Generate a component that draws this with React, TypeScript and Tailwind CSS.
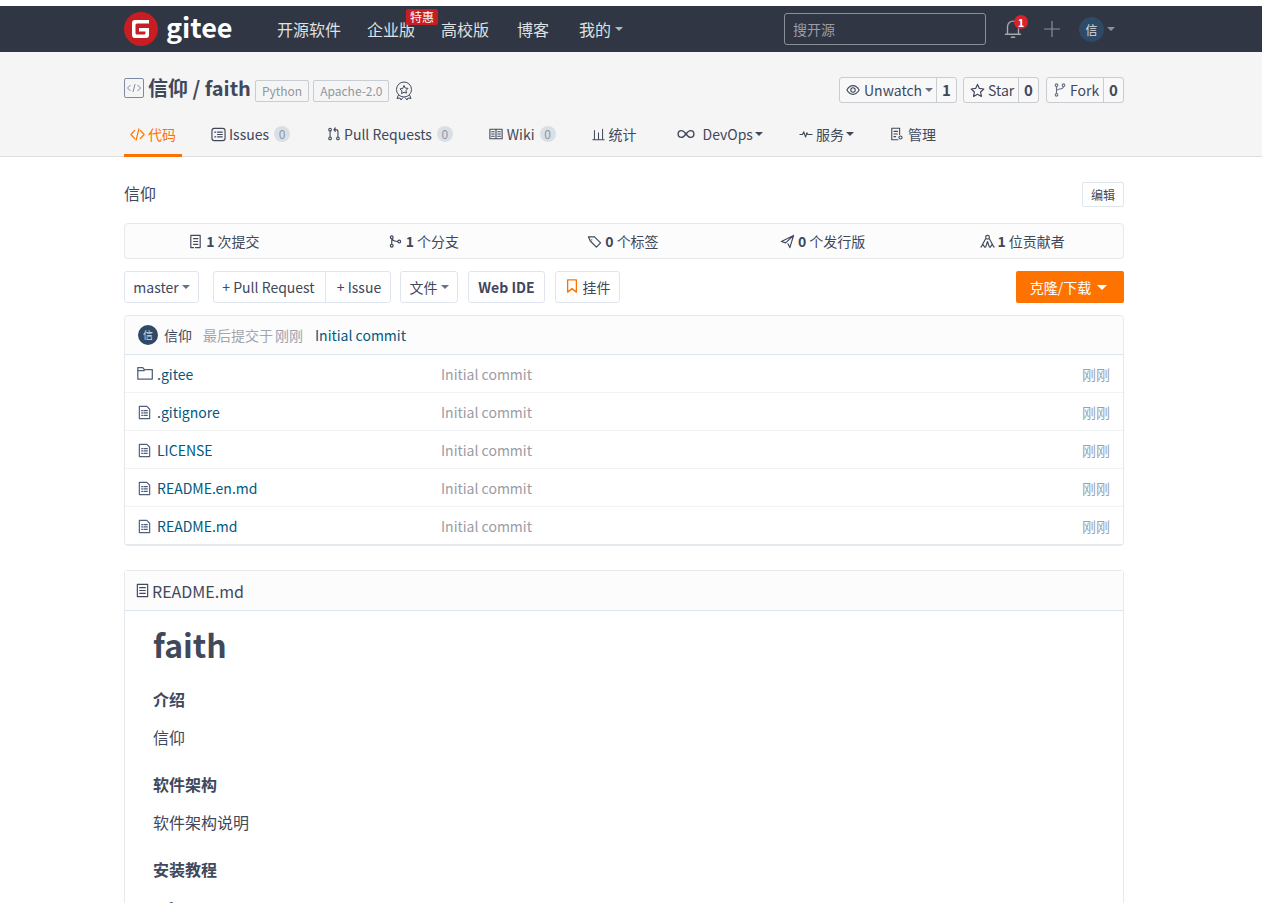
import type { ReactNode } from "react";

const Caret = ({ className = "border-t-[#6a7180]" }: { className?: string }) => (
  <span className={`inline-block w-0 h-0 border-x-[4px] border-x-transparent border-t-[4px] ${className}`} />
);

const Icon = ({ children, size = 14, className = "" }: { children: ReactNode; size?: number; className?: string }) => (
  <svg
    width={size}
    height={size}
    viewBox="0 0 16 16"
    fill="none"
    stroke="currentColor"
    strokeWidth="1.250"
    strokeLinecap="round"
    strokeLinejoin="round"
    className={`shrink-0 ${className}`}
  >
    {children}
  </svg>
);

const FileIcon = () => (
  <Icon size={15} className="text-[#4f5f7e]">
    <path d="M2.500 1.500h8l3 3v10h-11z" />
    <path d="M5 6h1M5 8.500h1M5 11h1M7.500 6h3.500M7.500 8.500h3.500M7.500 11h3.500" strokeWidth="1.300" />
  </Icon>
);

const FolderIcon = () => (
  <Icon size={16} className="text-[#4f5f7e] -mt-[2px]">
    <path d="M.8 14V2.500h5l1.500 2h8V14z" />
    <path d="M.8 5.500h6.500" />
  </Icon>
);

const files = [
  { name: ".gitee", folder: true },
  { name: ".gitignore" },
  { name: "LICENSE" },
  { name: "README.en.md" },
  { name: "README.md" },
];

const stats = [
  {
    n: "1",
    label: "次提交",
    icon: <path d="M3 1.500h10v13H8M3 1.500v13h3M6 5h4.500M6 8h4.500M6 11h4.500" />,
  },
  {
    n: "1",
    label: "个分支",
    icon: <path d="M4 5v6M5.500 3.500a1.500 1.500 0 1 1-3 0 1.500 1.500 0 0 1 3 0zM5.500 12.500a1.500 1.500 0 1 1-3 0 1.500 1.500 0 0 1 3 0zM13.500 8a1.500 1.500 0 1 1-3 0 1.500 1.500 0 0 1 3 0zM10.500 8C8 8 5 7 4.500 5" />,
  },
  {
    n: "0",
    label: "个标签",
    icon: <path d="M1.500 3h6.500l6.500 6.500-4.500 4.500-6.500-6.500zM5 6.200h.1" />,
  },
  {
    n: "0",
    label: "个发行版",
    icon: <path d="M14.500 1.500L1.500 8l4.500 1.500 8.500-8-4 13-2-4" />,
  },
  {
    n: "1",
    label: "位贡献者",
    icon: <path d="M8 1.500a2 2 0 1 1 0 4 2 2 0 0 1 0-4zM6 5l-3.500 6.500M10 5l3.500 6.500M1 14l2-3 2 3M6 14l2-6 2 6M11 14l2-3 2 3" />,
  },
];

const Tab = ({ icon, label, count, caret, className = "", gap = "gap-[3px]" }: { icon: ReactNode; label: string; count?: boolean; caret?: boolean; className?: string; gap?: string }) => (
  <div className={`flex items-center h-[20px] mt-[1px] ${className}`}>
    <div className={`flex items-center ${gap}`}>
      {icon}
      <span>{label}</span>
    </div>
    {caret && <Caret className="ml-[2px] border-t-[#40485b]" />}
    {count && (
      <span className="ml-[5px] w-[16px] h-[16px] rounded-full bg-[#dadfe5] text-[#8a95a5] text-[12px] leading-[16px] text-center">0</span>
    )}
  </div>
);

const SocialBtn = ({ icon, label, count, caret, className, gap }: { icon: ReactNode; label: string; count: string; caret?: boolean; className: string; gap: string }) => (
  <div className={`flex h-[26px] border border-[#c8ccd3] rounded-[3px] bg-[#f8f8f8] text-[14px] leading-[24px] text-[#40485b] ${className}`}>
    <div className={`flex-1 flex items-center pl-[6px] ${gap}`}>
      {icon}
      <span>{label}</span>
      {caret && <Caret className="-ml-[1px] border-t-[#6a7180]" />}
    </div>
    <div className="border-l border-[#c8ccd3] w-[20px] text-center text-[15px] font-bold">{count}</div>
  </div>
);

export default function App() {
  return (
    <div className="min-h-screen bg-white pt-[6px] text-[#40485b] font-['Noto_Sans_CJK_SC','Noto_Sans',sans-serif] text-[14px]">
      {/* NAVBAR */}
      <div className="h-[46px] bg-[#303643] pl-[124px] flex items-center text-[16px] text-[#dfe1e4]">
        <div className="w-[34px] h-[34px] rounded-full bg-[#c71d23] flex items-center justify-center">
          <svg width="22" height="22" viewBox="0 0 22 22">
            <path d="M5 2h14v3.500H7a1.500 1.500 0 0 0-1.500 1.500v8A1.500 1.500 0 0 0 7 16.500h7a1.500 1.500 0 0 0 1.500-1.500v-1.500H9V10h10v7a3 3 0 0 1-3 3H5a3 3 0 0 1-3-3V5a3 3 0 0 1 3-3z" fill="#fff" />
          </svg>
        </div>
        <div className="ml-[8px] w-[111px] text-[27px] leading-[34px] font-bold text-white -mt-[4px]">gitee</div>
        <div>开源软件</div>
        <div className="relative ml-[26px]">
          企业版
          <span className="absolute left-[39px] -top-[8px] w-[32px] h-[16px] rounded-[2px] bg-[#c71d23] text-white text-[12px] leading-[16px] text-center">特惠</span>
        </div>
        <div className="ml-[26px]">高校版</div>
        <div className="ml-[28px]">博客</div>
        <div className="ml-[30px] flex items-center gap-[4px]">
          我的 <Caret className="border-t-[#b5b8be]" />
        </div>
        <div className="ml-[161px] w-[202px] h-[32px] border border-[#8b8f98] rounded-[3px] pl-[8px] text-[14px] leading-[30px] text-[#9a9da5]">搜开源</div>
        <div className="relative ml-[16px] w-[22px] h-[22px] -mt-[3px] text-[#9a9da5]">
          <Icon size={22} className="text-[#a5a8ae]">
            <path d="M2.500 12.500h11M4 12.500V7a4 4 0 0 1 8 0v5.500M6.800 14.700h2.400" strokeWidth="1" />
          </Icon>
          <span className="absolute left-[12px] -top-[2px] w-[14px] h-[14px] rounded-full bg-[#d8232a] text-white text-[11px] leading-[14px] font-bold text-center">1</span>
        </div>
        <svg width="18" height="18" viewBox="0 0 18 18" className="ml-[19px] text-[#8b8f98]" stroke="currentColor" strokeWidth="1.200">
          <path d="M9 1v16M1 9h16" />
        </svg>
        <div className="ml-[18px] w-[25px] h-[25px] rounded-full bg-[#2f4a66] text-[#d5dbe2] text-[12px] leading-[25px] text-center">信</div>
        <Caret className="ml-[3px] border-t-[#8b8f98]" />
      </div>

      {/* REPO HEADER */}
      <div className="h-[105px] bg-[#f5f5f5] border-b border-[#dddddd] pl-[124px] pr-[138px]">
        <div className="flex items-center pt-[25px] h-[51px]">
          <svg width="20" height="20" viewBox="0 0 20 20" fill="none" stroke="#7d8aa3" strokeWidth="1" className="-mt-[5px]">
            <rect x="0.500" y="0.500" width="19" height="19" rx="1.500" />
            <path d="M6.500 7l-3 3 3 3M13.500 7l3 3-3 3M11 6l-2 8" />
          </svg>
          <div className="ml-[4px] -mt-[4px] text-[20px] leading-[26px] font-semibold text-[#40485b]">信仰 / faith</div>
          <span className="ml-[4px] mt-[2px] h-[22px] px-[6px] border border-[#c8ccd3] rounded-[2px] text-[12px] leading-[20px] text-[#8f97a3]">Python</span>
          <span className="ml-[4px] mt-[2px] h-[22px] px-[6px] border border-[#c8ccd3] rounded-[2px] text-[12px] leading-[20px] text-[#8f97a3]">Apache-2.0</span>
          <svg width="18" height="20" viewBox="0 0 18 20" fill="none" stroke="#40485b" strokeWidth="1" className="ml-[6px] mt-[2px]">
            <circle cx="9" cy="8.500" r="7.500" />
            <path d="M9 4.500l1.200 2.500 2.800.4-2 2 .5 2.700L9 11.300l-2.500 1.300.5-2.700-2-2 2.800-.4z" />
            <path d="M3.500 14l-1.500 3.500 3-.5 1 2 2-2.500M14.500 14l1.500 3.500-3-.5-1 2-2-2.500" />
          </svg>
          <div className="ml-auto flex">
            <SocialBtn
              className="w-[118px]"
              gap="gap-[4px]"
              label="Unwatch"
              count="1"
              caret
              icon={
                <Icon size={14} className="text-[#40485b]">
                  <path d="M1 8c2-3.500 4.500-5 7-5s5 1.500 7 5c-2 3.500-4.500 5-7 5s-5-1.500-7-5z" />
                  <circle cx="8" cy="8" r="2.500" />
                </Icon>
              }
            />
            <SocialBtn
              className="w-[76px] ml-[6px]"
              gap="gap-[3px]"
              label="Star"
              count="0"
              icon={
                <Icon size={15} className="text-[#40485b]">
                  <path d="M8 1.500l2 4.300 4.700.6-3.400 3.200.9 4.700L8 12l-4.200 2.300.9-4.700L1.300 6.400 6 5.800z" />
                </Icon>
              }
            />
            <SocialBtn
              className="w-[78px] ml-[7px]"
              gap="gap-[3px]"
              label="Fork"
              count="0"
              icon={
                <Icon size={14} className="text-[#6a7180]">
                  <circle cx="4" cy="2.500" r="1.500" />
                  <circle cx="12" cy="2.500" r="1.500" />
                  <circle cx="4" cy="13.500" r="1.500" />
                  <path d="M4 4v8M12 4c0 4-8 2-8 5" />
                </Icon>
              }
            />
          </div>
        </div>
        <div className="flex h-[53px] text-[14px] leading-[20px] pt-[20px] relative">
          <div className="absolute left-0 bottom-[-1px] w-[58px] h-[3px] bg-[#fe7300]" />
          <div className="absolute left-[6px] top-[21px] flex items-center gap-[3px] text-[#fe7300]">
            <Icon size={15}><path d="M5 3.500L1 8l4 4.500M11 3.500L15 8l-4 4.500M9.500 2l-3 12" /></Icon>
            <span>代码</span>
          </div>
          <Tab
            className="ml-[87px]"
            label="Issues"
            count
            icon={<Icon size={15}><rect x="1" y="1.500" width="14" height="13" rx="2.500" /><path d="M4 5.500h1M4 10.500h1M7 5.500h5M7 8h5M7 10.500h5" /></Icon>}
          />
          <Tab
            className="ml-[37px]"
            label="Pull Requests"
            count
            icon={<Icon size={14}><circle cx="3.500" cy="3" r="1.500" /><circle cx="3.500" cy="13" r="1.500" /><circle cx="12.500" cy="13" r="1.500" /><path d="M3.500 4.500v7M12.500 11.500V5c0-1.500-1-2-2.500-2H8M9.500 1L8 3l1.500 2" /></Icon>}
          />
          <Tab
            className="ml-[36px]"
            gap="gap-[4px]"
            label="Wiki"
            count
            icon={<Icon size={14}><path d="M1 2.500h14v11H1zM8 2.500v11M3 5.500h3M3 8h3M3 10.500h3M10 5.500h3M10 8h3M10 10.500h3" /></Icon>}
          />
          <Tab
            className="ml-[36px]"
            gap="gap-[4px]"
            label="统计"
            icon={<Icon size={13}><path d="M1 14.500h14M3 3v11M8 6v8M13 1.500v12.500" /></Icon>}
          />
          <Tab
            className="ml-[40px]"
            gap="gap-[8px]"
            label="DevOps"
            caret
            icon={<Icon size={18}><path d="M8 8c-1.500-2-2.500-3-4-3a3 3 0 0 0 0 6c1.500 0 2.500-1 4-3zm0 0c1.500-2 2.500-3 4-3a3 3 0 0 1 0 6c-1.500 0-2.500-1-4-3z" /></Icon>}
          />
          <Tab
            className="ml-[36px]"
            label="服务"
            caret
            icon={<Icon size={14}><path d="M1 8.500h3l1.500-3 2 6 1.500-5 1 2h5" /></Icon>}
          />
          <Tab
            className="ml-[36px]"
            gap="gap-[4px]"
            label="管理"
            icon={<Icon size={14}><path d="M2 14.500v-13h9v7M2 14.500h7M4.500 5h4M4.500 8h4M4.500 11h2" /><circle cx="12" cy="12" r="1.800" /></Icon>}
          />
        </div>
      </div>

      {/* MAIN */}
      <div className="ml-[124px] w-[1000px]">
        <div className="flex items-center justify-between h-[25px] mt-[25px]">
          <div className="text-[16px] leading-[25px] -mt-[2px]">信仰</div>
          <div className="w-[42px] h-[25px] border border-[#dfe5ec] rounded-[2px] text-[12px] leading-[23px] text-center">编辑</div>
        </div>

        {/* STATS */}
        <div className="mt-[16px] h-[36px] grid grid-cols-5 border border-[#e3e9ed] rounded-[4px] bg-[#fcfcfc]">
          {stats.map((s) => (
            <div key={s.label} className="flex items-center justify-center gap-[3px] pr-[2px] text-[14px] leading-[34px]">
              <Icon size={15}>{s.icon}</Icon>
              <b className="font-bold">{s.n}</b>
              <span>{s.label}</span>
            </div>
          ))}
        </div>

        {/* BUTTONS */}
        <div className="mt-[12px] flex h-[32px] text-[14px] leading-[30px]">
          <div className="w-[75px] border border-[#dfe5ec] rounded-[3px] flex items-center justify-center gap-[3px]">
            master <Caret />
          </div>
          <div className="ml-[14px] w-[178px] border border-[#dfe5ec] rounded-[3px] flex">
            <div className="w-[112px] pr-[2px] text-center border-r border-[#dfe5ec]">+ Pull Request</div>
            <div className="flex-1 pl-[2px] text-center">+ Issue</div>
          </div>
          <div className="ml-[9px] w-[58px] border border-[#dfe5ec] rounded-[3px] flex items-center justify-center gap-[3px]">
            文件 <Caret />
          </div>
          <div className="ml-[10px] w-[77px] border border-[#dfe5ec] rounded-[3px] text-center font-bold">Web IDE</div>
          <div className="ml-[10px] w-[65px] border border-[#dfe5ec] rounded-[3px] flex items-center justify-center gap-[4px]">
            <Icon size={14} className="text-[#fe7300] -mt-[2px]"><path d="M3 1h10v14l-5-4-5 4z" strokeWidth="1.500" /></Icon>
            挂件
          </div>
          <div className="ml-auto w-[108px] pr-[3px] rounded-[2px] bg-[#fe7300] text-white flex items-center justify-center gap-[6px]">
            克隆/下载 <span className="inline-block w-0 h-0 border-x-[5px] border-x-transparent border-t-[5px] border-t-white" />
          </div>
        </div>

        {/* FILES */}
        <div className="mt-[12px] border border-[#e3e9ed] rounded-[4px]">
          <div className="h-[39px] bg-[#fcfcfc] border-b border-[#dfe5ec] flex items-center pl-[13px] rounded-t-[4px]">
            <div className="w-[20px] h-[20px] rounded-full bg-[#2f4a66] text-[#d5dbe2] text-[10px] leading-[20px] text-center">信</div>
            <span className="ml-[6px]">信仰</span>
            <span className="ml-[11px] text-[#a1a5ad]">最后提交于</span>
            <span className="ml-[2px] text-[#96a2b2]">刚刚</span>
            <span className="ml-[12px] text-[#005980]">Initial commit</span>
          </div>
          {files.map((f, i) => (
            <div key={f.name} className={`h-[38px] flex items-center pt-[1px] pl-[12px] pr-[13px] border-b ${i < 4 ? "border-[#f1f3f5]" : "border-[#e3e9ed]"}`}>
              <div className="w-[20px] flex justify-start">{f.folder ? <FolderIcon /> : <FileIcon />}</div>
              <div className="w-[284px] text-[#005980]">{f.name}</div>
              <div className="text-[#9b9ba3]">Initial commit</div>
              <div className="ml-auto text-[#96a2b2]">刚刚</div>
            </div>
          ))}
        </div>

        {/* README */}
        <div className="mt-[24px] border border-[#e3e9ed] border-b-0 rounded-t-[4px] h-[340px]">
          <div className="h-[40px] bg-[#fcfcfc] border-b border-[#dfe5ec] flex items-center pl-[10px] text-[16px] gap-[2px]">
            <Icon size={15}>
              <path d="M2.500 1.500h11v13h-11zM5 5h6M5 8h6M5 11h6" />
            </Icon>
            README.md
          </div>
          <div className="pl-[28px]">
            <h1 className="text-[32px] leading-[44px] font-bold mt-[11px]">faith</h1>
            <h3 className="text-[16px] leading-[24px] font-bold mt-[21px]">介绍</h3>
            <p className="text-[16px] leading-[24px] mt-[14px]">信仰</p>
            <h3 className="text-[16px] leading-[24px] font-bold mt-[23px]">软件架构</h3>
            <p className="text-[16px] leading-[24px] mt-[14px]">软件架构说明</p>
            <h3 className="text-[16px] leading-[24px] font-bold mt-[23px]">安装教程</h3>
            <p className="text-[16px] leading-[24px] mt-[14px] pl-[14px]">1.&nbsp;&nbsp;xxxx</p>
          </div>
        </div>
      </div>
    </div>
  );
}
